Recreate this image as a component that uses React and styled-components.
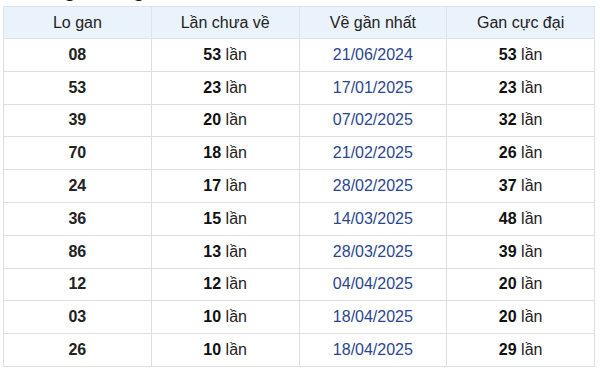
import React from "react";
import styled, { createGlobalStyle } from "styled-components";

const GlobalStyle = createGlobalStyle`
  html, body {
    margin: 0;
    padding: 0;
    background: #ffffff;
  }
  body {
    font-family: "Liberation Sans", Arial, sans-serif;
    color: #222222;
  }
`;

const Page = styled.div`
  width: 600px;
  height: 370px;
  overflow: hidden;
  padding: 0 5px 0 3px;
  box-sizing: border-box;
`;

const Title = styled.h2`
  margin: -21px 0 0 12px;
  height: 27px;
  font-size: 20px;
  line-height: 22px;
  font-weight: bold;
  color: #111111;
  white-space: nowrap;
`;

const Table = styled.table`
  width: 592px;
  border-collapse: collapse;
  table-layout: fixed;
  font-size: 16px;
`;

const HeadCell = styled.th`
  height: 31px;
  padding: 0;
  background: #eaf3fc;
  border: 1px solid #dde3ea;
  font-weight: normal;
  color: #222222;
  text-align: center;
`;

const Cell = styled.td`
  height: 31.8px;
  padding: 0;
  border: 1px solid #dedede;
  text-align: center;
  color: ${(p) => (p.$date ? "#2b4690" : "#222222")};
  font-weight: ${(p) => (p.$bold ? "bold" : "normal")};
`;

const Num = styled.b`
  font-weight: bold;
  color: #111111;
`;

const rows = [
  ["08", 53, "21/06/2024", 53],
  ["53", 23, "17/01/2025", 23],
  ["39", 20, "07/02/2025", 32],
  ["70", 18, "21/02/2025", 26],
  ["24", 17, "28/02/2025", 37],
  ["36", 15, "14/03/2025", 48],
  ["86", 13, "28/03/2025", 39],
  ["12", 12, "04/04/2025", 20],
  ["03", 10, "18/04/2025", 20],
  ["26", 10, "18/04/2025", 29],
];

const Count = ({ n }) => (
  <>
    <Num>{n}</Num> lần
  </>
);

export default function App() {
  return (
    <>
      <GlobalStyle />
      <Page>
        <Title>Thống kê lô gan lâu chưa về</Title>
        <Table>
          <thead>
            <tr>
              <HeadCell>Lo gan</HeadCell>
              <HeadCell>Lần chưa về</HeadCell>
              <HeadCell>Về gần nhất</HeadCell>
              <HeadCell>Gan cực đại</HeadCell>
            </tr>
          </thead>
          <tbody>
            {rows.map((r) => (
              <tr key={r[0]}>
                <Cell $bold>{r[0]}</Cell>
                <Cell>
                  <Count n={r[1]} />
                </Cell>
                <Cell $date>{r[2]}</Cell>
                <Cell>
                  <Count n={r[3]} />
                </Cell>
              </tr>
            ))}
          </tbody>
        </Table>
      </Page>
    </>
  );
}
